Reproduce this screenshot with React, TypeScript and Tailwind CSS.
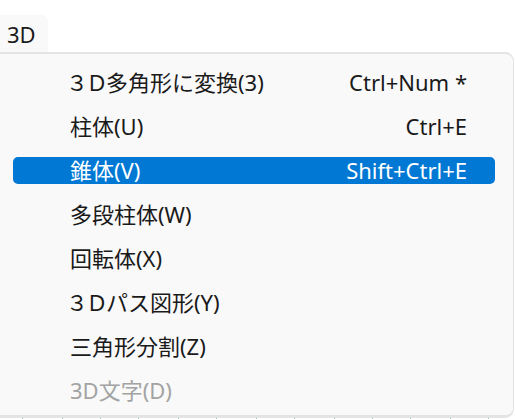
import React from 'react';

type Item = {
  label: string;
  prefix?: string;
  shortcut?: string;
  active?: boolean;
  disabled?: boolean;
};

const items: Item[] = [
  { prefix: '３Ｄ', label: '多角形に変換(3)', shortcut: 'Ctrl+Num *' },
  { label: '柱体(U)', shortcut: 'Ctrl+E' },
  { label: '錐体(V)', shortcut: 'Shift+Ctrl+E', active: true },
  { label: '多段柱体(W)' },
  { label: '回転体(X)' },
  { prefix: '３Ｄ', label: 'パス図形(Y)' },
  { label: '三角形分割(Z)' },
  { label: '3D文字(D)', disabled: true },
];

const ticks = [22, 62, 100, 138, 178, 216, 256, 294, 334, 372, 410, 450, 488];

function MenuRow({ item }: { item: Item }) {
  const tone = item.active
    ? 'bg-[#0078d4] text-white'
    : item.disabled
      ? 'text-[#a3a3a3]'
      : 'text-[#1a1a1a]';
  return (
    <div className="h-[44px] pl-[13px] pr-[18px] flex items-center">
      <div className={`h-[27px] w-full rounded-[5px] flex items-center justify-between pl-[57px] pr-[28px] ${tone}`}>
        <span className="leading-none">
          {item.prefix && <span className="-ml-[4px] tracking-[-2px]">{item.prefix}</span>}
          {item.label}
        </span>
        {item.shortcut && <span className="leading-none">{item.shortcut}</span>}
      </div>
    </div>
  );
}

export default function App() {
  return (
    <div
      className="w-[515px] h-[419px] bg-white overflow-hidden flex flex-col text-[22px]"
      style={{ fontFamily: '"Noto Sans", "Noto Sans CJK JP", sans-serif' }}
    >
      {/* menu bar */}
      <div className="h-[52px] flex items-end">
        <div className="w-[48px] h-[37px] bg-[#f9f9f9] rounded-tr-[6px] pl-[7px] flex items-center text-[#1a1a1a] leading-none">
          3D
        </div>
      </div>

      {/* dropdown panel */}
      <div className="w-[514px] h-[366px] bg-[#f9f9f9] border-t-2 border-r border-b-[3px] border-[#e4e4e4] rounded-tr-[9px] rounded-br-[9px] pt-[6px]">
        {items.map((it) => (
          <MenuRow key={it.label} item={it} />
        ))}
      </div>

      {/* ruler ticks underneath */}
      <div className="h-[1px] flex">
        {ticks.map((x, i) => (
          <div
            key={x}
            className="w-[1px] h-[1px] bg-[#9fb5ad]"
            style={{ marginLeft: i === 0 ? x : x - ticks[i - 1] - 1 }}
          />
        ))}
      </div>
    </div>
  );
}
